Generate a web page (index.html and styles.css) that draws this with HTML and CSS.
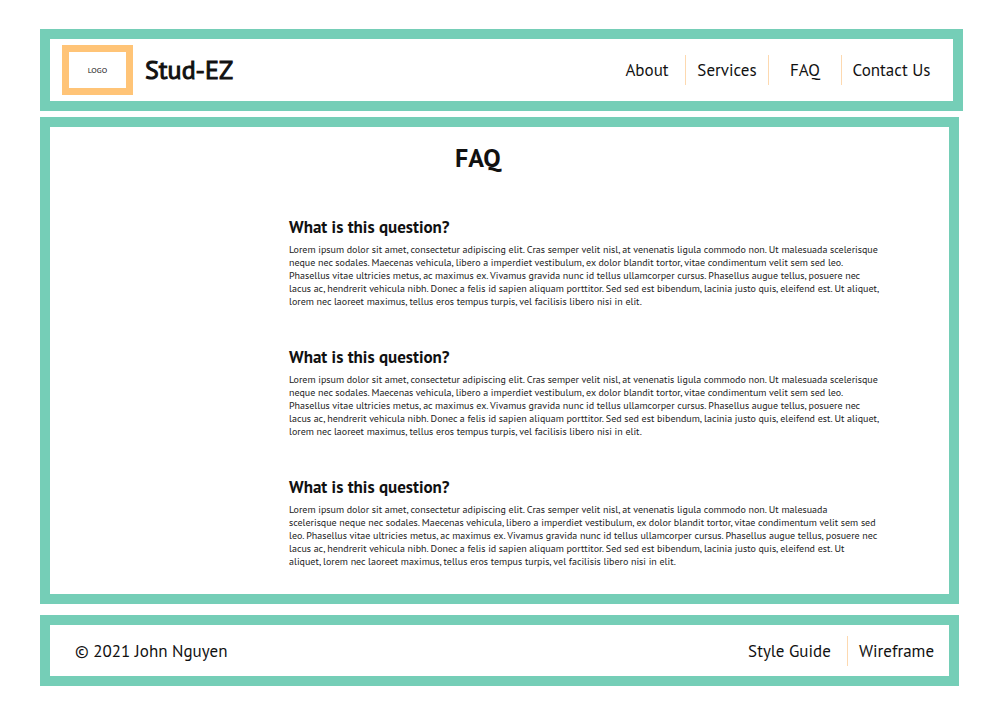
FILE: index.html
```html
<!DOCTYPE html>
<html lang="en">
<head>
<meta charset="utf-8">
<meta name="viewport" content="width=device-width, initial-scale=1">
<title>Stud-EZ FAQ</title>
<link rel="stylesheet" href="styles.css">
</head>
<body>
<header class="panel site-header">
  <div class="brand">
    <div class="logo">LOGO</div>
    <span class="brand-name">Stud-EZ</span>
  </div>
  <nav class="links">
    <a class="link link-about" href="#">About</a>
    <a class="link link-services" href="#">Services</a>
    <a class="link link-faq" href="#">FAQ</a>
    <a class="link link-contact" href="#">Contact Us</a>
  </nav>
</header>
<main class="panel content">
  <h1 class="title">FAQ</h1>
  <div class="questions">
    <section class="question">
      <h2 class="question-title">What is this question?</h2>
      <p class="answer">Lorem ipsum dolor sit amet, consectetur adipiscing elit. Cras semper velit nisl, at venenatis ligula commodo non. Ut malesuada scelerisque<br>neque nec sodales. Maecenas vehicula, libero a imperdiet vestibulum, ex dolor blandit tortor, vitae condimentum velit sem sed leo.<br>Phasellus vitae ultricies metus, ac maximus ex. Vivamus gravida nunc id tellus ullamcorper cursus. Phasellus augue tellus, posuere nec<br>lacus ac, hendrerit vehicula nibh. Donec a felis id sapien aliquam porttitor. Sed sed est bibendum, lacinia justo quis, eleifend est. Ut aliquet,<br>lorem nec laoreet maximus, tellus eros tempus turpis, vel facilisis libero nisi in elit.</p>
    </section>
    <section class="question">
      <h2 class="question-title">What is this question?</h2>
      <p class="answer">Lorem ipsum dolor sit amet, consectetur adipiscing elit. Cras semper velit nisl, at venenatis ligula commodo non. Ut malesuada scelerisque<br>neque nec sodales. Maecenas vehicula, libero a imperdiet vestibulum, ex dolor blandit tortor, vitae condimentum velit sem sed leo.<br>Phasellus vitae ultricies metus, ac maximus ex. Vivamus gravida nunc id tellus ullamcorper cursus. Phasellus augue tellus, posuere nec<br>lacus ac, hendrerit vehicula nibh. Donec a felis id sapien aliquam porttitor. Sed sed est bibendum, lacinia justo quis, eleifend est. Ut aliquet,<br>lorem nec laoreet maximus, tellus eros tempus turpis, vel facilisis libero nisi in elit.</p>
    </section>
    <section class="question">
      <h2 class="question-title">What is this question?</h2>
      <p class="answer">Lorem ipsum dolor sit amet, consectetur adipiscing elit. Cras semper velit nisl, at venenatis ligula commodo non. Ut malesuada<br>scelerisque neque nec sodales. Maecenas vehicula, libero a imperdiet vestibulum, ex dolor blandit tortor, vitae condimentum velit sem sed<br>leo. Phasellus vitae ultricies metus, ac maximus ex. Vivamus gravida nunc id tellus ullamcorper cursus. Phasellus augue tellus, posuere nec<br>lacus ac, hendrerit vehicula nibh. Donec a felis id sapien aliquam porttitor. Sed sed est bibendum, lacinia justo quis, eleifend est. Ut<br>aliquet, lorem nec laoreet maximus, tellus eros tempus turpis, vel facilisis libero nisi in elit.</p>
    </section>
  </div>
</main>
<footer class="panel site-footer">
  <span class="copyright">© 2021 John Nguyen</span>
  <nav class="links">
    <a class="link link-guide" href="#">Style Guide</a>
    <a class="link link-wireframe" href="#">Wireframe</a>
  </nav>
</footer>
</body>
</html>
```
FILE: styles.css
```css
* {
  box-sizing: border-box;
}

body {
  margin: 0;
  padding: 29px 45px 30px 40px;
  background: #fff;
  color: #111;
  font-family: "PT Sans", "Noto Sans", sans-serif;
}

.panel {
  border: 10px solid #75ceb7;
  background: #fff;
}

.site-header {
  display: flex;
  align-items: center;
  justify-content: space-between;
  padding: 6px 12px;
}

.brand {
  display: flex;
  align-items: center;
  gap: 12px;
}

.logo {
  display: grid;
  place-items: center;
  width: 71px;
  height: 50px;
  border: 7px solid #ffc477;
  font-size: 8px;
}

.brand-name {
  font-size: 26px;
  line-height: 32px;
  -webkit-text-stroke: 1px #111;
}

.links {
  display: flex;
  align-items: center;
}

.link {
  color: #111;
  font-size: 17px;
  line-height: 30px;
  text-align: center;
  text-decoration: none;
  white-space: nowrap;
}

.link + .link {
  border-left: 1px solid #fdd9b0;
}

.link-about { width: 76px; }
.link-services { width: 83px; }
.link-faq { width: 73px; }
.link-contact { width: 100px; }
.link-guide { width: 115px; }
.link-wireframe { width: 98px; }

.content {
  margin: 6px 4px 0 0;
  padding: 14px 60px 26px 239px;
}

.title {
  margin: 0 0 40px 166px;
  font-size: 26px;
  line-height: 34px;
}

.questions {
  display: grid;
  gap: 37px;
}

.question-title {
  margin: 0 0 4px;
  font-size: 17px;
  line-height: 24px;
}

.answer {
  margin: 0;
  color: #222;
  font-size: 10px;
  line-height: 13px;
  white-space: nowrap;
}

.site-footer {
  display: flex;
  align-items: center;
  justify-content: space-between;
  margin: 11px 4px 0 0;
  padding: 11px 4px 10px 25px;
}

.copyright {
  font-size: 17px;
  line-height: 30px;
}
```
